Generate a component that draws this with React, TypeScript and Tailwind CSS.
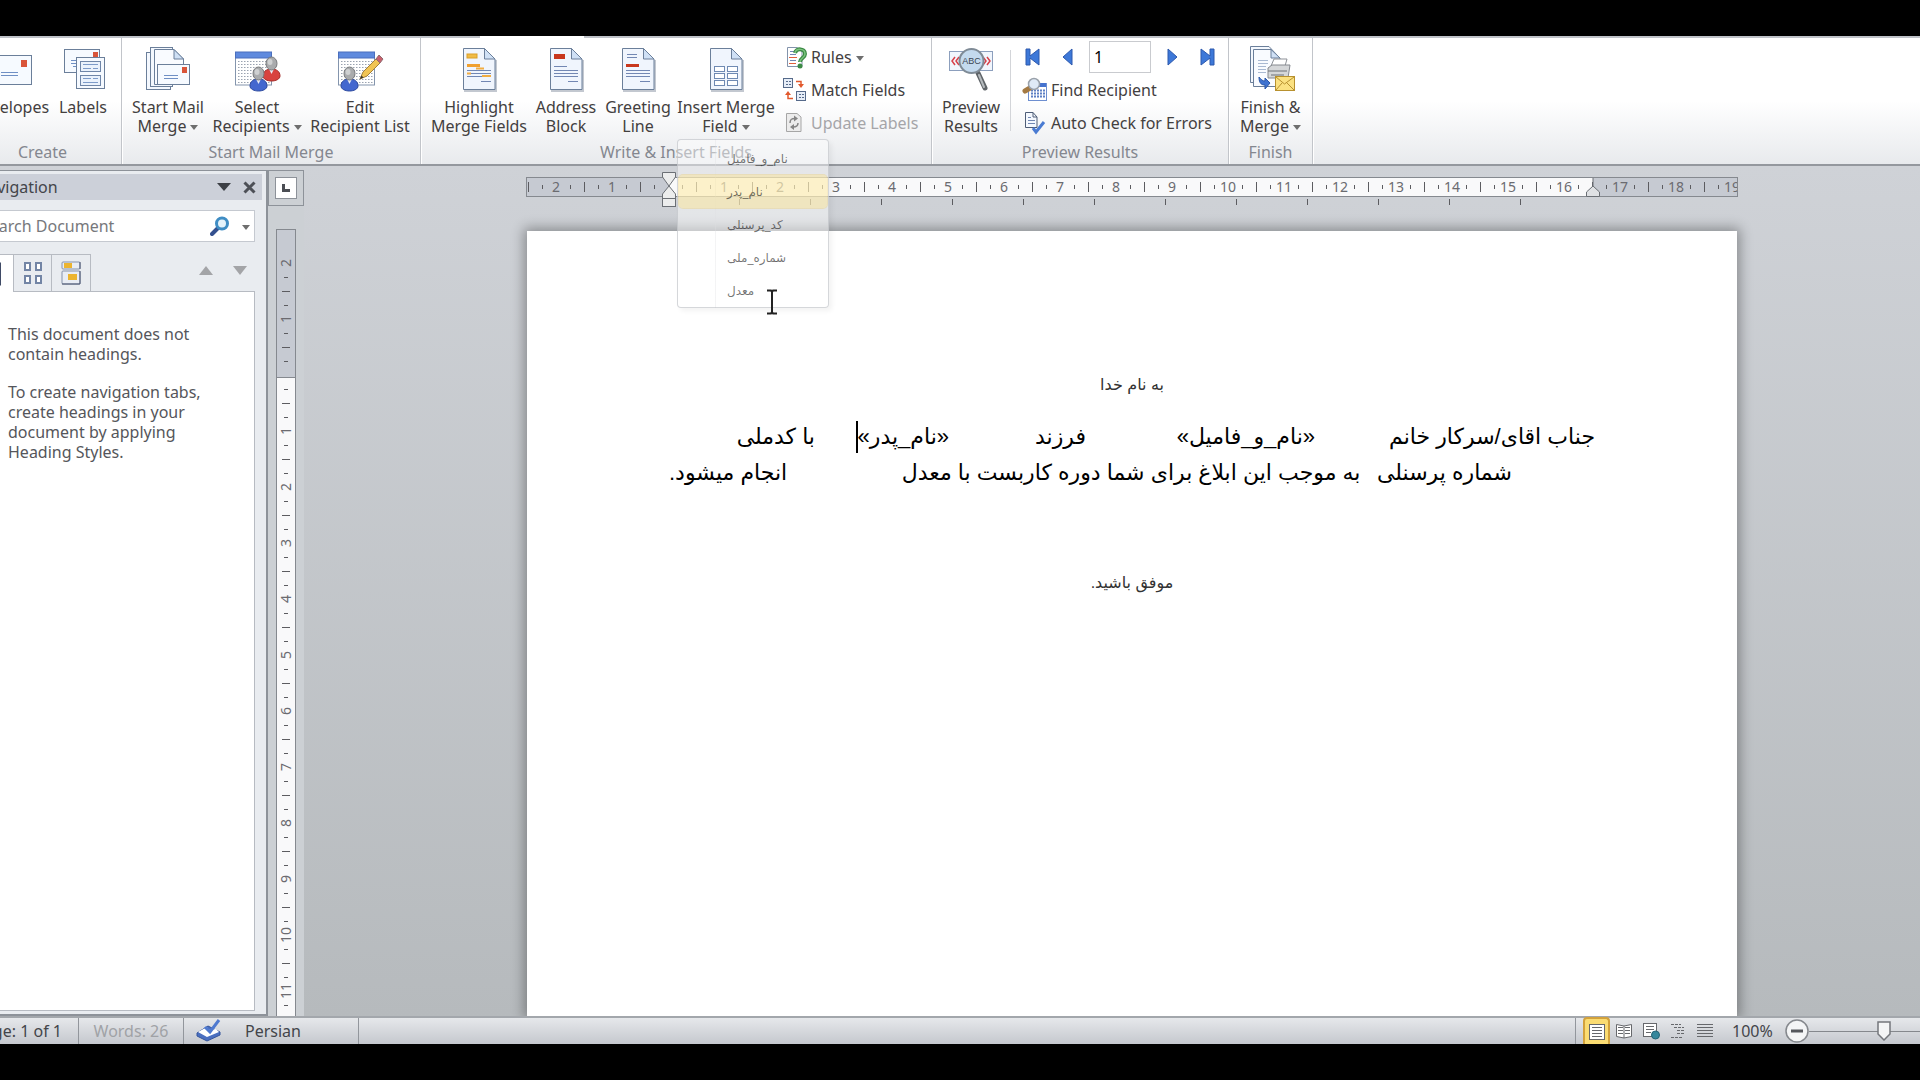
import React from 'react';

const INK = '#6b7f9a';

const Svg = ({ size = 44, children }: { size?: number; children: React.ReactNode }) => (
  <svg
    width={size}
    height={size}
    viewBox={`0 0 ${size} ${size}`}
    fill="none"
    className="shrink-0 overflow-visible"
    aria-hidden="true"
  >
    {children}
  </svg>
);

const Person = ({ x, y, color, edge }: { x: number; y: number; color: string; edge: string }) => (
  <g transform={`translate(${x} ${y})`}>
    <path d="M0 19 C0 14 4 12 8.500 12 C13 12 17 14 17 19 C17 22 13 24 8.500 24 C4 24 0 22 0 19Z" fill={color} stroke={edge} />
    <path d="M6 12 L8.500 17 L11 12Z" fill="#e8ecf5" />
    <ellipse cx="8.500" cy="6.500" rx="5.500" ry="6.500" fill="#a9abad" stroke="#77797c" />
    <ellipse cx="7" cy="5" rx="2.500" ry="3" fill="#cfd1d2" />
  </g>
);

const SheetGrid = () => (
  <>
    <rect x="0.500" y="7" width="36" height="32" fill="#fff" stroke="#8495ad" />
    <rect x="0.500" y="6" width="36" height="6" fill="#5f8ade" stroke="#4a6fbd" />
    {[15, 18, 21, 24, 27, 30, 33, 36].map((y) => (
      <path key={y} d={`M3 ${y}.500 H35`} stroke="#9aa3b0" strokeDasharray="1.500 1.500" />
    ))}
  </>
);

const Page = ({ children }: { children?: React.ReactNode }) => (
  <Svg>
    <path d="M7 45 H39 V14" stroke="#c3c8d0" strokeWidth="2" />
    <path d="M6.500 2.500 H27.500 L38 13 V43.500 H6.500Z" fill="#f0f5fd" stroke={INK} />
    <path d="M27.500 2.500 V13 H38Z" fill="#cfe0f5" stroke={INK} />
    {children}
  </Svg>
);

const EnvelopeIcon = () => (
  <Svg>
    <rect x="2.500" y="9.500" width="40" height="29" fill="#f6faff" stroke={INK} />
    <rect x="32" y="14" width="6" height="7" fill="#d9553a" />
    <path d="M12 26.500 H29 M12 29.500 H29" stroke="#6f8fc4" />
  </Svg>
);

const LabelsIcon = () => (
  <Svg>
    <rect x="3.500" y="3.500" width="35" height="23" fill="#f6faff" stroke={INK} />
    <rect x="32" y="6" width="5" height="5" fill="#d9553a" />
    <path d="M10 14.500 H15 M10 17.500 H15 M12 20.500 H15" stroke="#6f8fc4" />
    <rect x="15.500" y="11.500" width="28" height="31" fill="#f6faff" stroke={INK} />
    <rect x="19.500" y="15.500" width="20" height="10" fill="#eaf2fc" stroke="#6f86a8" />
    <rect x="19.500" y="29.500" width="20" height="10" fill="#eaf2fc" stroke="#6f86a8" />
    <path d="M22 18.500 H37 M22 22.500 H30 M32 22.500 H37 M22 32.500 H30 M32 32.500 H37 M22 36.500 H37" stroke="#7d9bc9" />
  </Svg>
);

const StartMergeIcon = () => (
  <Svg>
    <rect x="0.500" y="6.500" width="24" height="37" fill="#f4f8fe" stroke={INK} />
    <rect x="4.500" y="1.500" width="22" height="39" fill="#f4f8fe" stroke={INK} />
    <path d="M8.500 3.500 H28 L37.500 13 V38.500 H8.500Z" fill="#f9fbff" stroke={INK} />
    <path d="M28 3.500 V13 H37.500Z" fill="#cfe0f5" stroke={INK} />
    <rect x="11.500" y="18.500" width="32" height="20" fill="#f6faff" stroke={INK} />
    <rect x="36" y="21" width="5" height="6" fill="#d9553a" />
    <path d="M18 29.500 H32 M18 32.500 H32" stroke="#6f8fc4" />
  </Svg>
);

const SelectIcon = () => (
  <Svg>
    <SheetGrid />
    <Person x={28} y={11} color="#d8433f" edge="#a52e2b" />
    <Person x={15} y={21} color="#4468cf" edge="#2d4a9e" />
  </Svg>
);

const EditListIcon = () => (
  <Svg>
    <SheetGrid />
    <Person x={3} y={21} color="#4468cf" edge="#2d4a9e" />
    <path d="M22 33 L25 26 L38 13 L42 17 L29 30Z" fill="#f1c453" stroke="#a3803a" />
    <path d="M38 13 L41 9 L45 13 L42 17Z" fill="#c9606c" stroke="#8f6a70" />
    <path d="M22 33 L23.500 29.500 L25.500 31.500Z" fill="#333" />
  </Svg>
);

const HighlightIcon = () => (
  <Page>
    <rect x="10" y="8" width="10" height="4" fill="#f0bb45" stroke="#d99f2a" />
    <rect x="10" y="18" width="13" height="3" fill="#f0a030" />
    <path d="M10 24.500 H34 M10 27.500 H34 M10 30.500 H34 M24 35.500 H34" stroke="#7287b3" />
    <path d="M19 22.500 H27 M10 27.500 H14 M25 30 H34" stroke="#f2ad42" strokeWidth="2" />
  </Page>
);

const AddressIcon = () => (
  <Page>
    <rect x="10" y="8" width="11" height="5" fill="#c8371d" />
    <path d="M10 20.500 H23 M10 24.500 H34 M10 27.500 H34 M10 30.500 H34 M24 35.500 H34" stroke="#7287b3" />
  </Page>
);

const GreetingIcon = () => (
  <Page>
    <path d="M11 8.500 H21 M11 11.500 H21 M10 24.500 H34 M10 27.500 H34 M10 30.500 H34 M24 35.500 H34" stroke="#7287b3" />
    <rect x="10" y="18" width="13" height="3" fill="#c8371d" />
  </Page>
);

const InsertFieldIcon = () => (
  <Page>
    {[20, 27, 34].map((y) => (
      <g key={y} stroke="#6f8ab3" fill="#fff">
        <rect x="10.500" y={y + 0.5} width="10" height="5" />
        <rect x="23.500" y={y + 0.5} width="10" height="5" />
      </g>
    ))}
  </Page>
);

const PreviewIcon = () => (
  <Svg>
    <rect x="0.500" y="5.500" width="43" height="19" fill="#f1f6fd" stroke="#8c9fbd" />
    <path d="M6 11 L3 15 L6 19 M10 11 L7 15 L10 19 M34 11 L37 15 L34 19 M38 11 L41 15 L38 19" stroke="#d8414a" strokeWidth="1.500" />
    <path d="M29 27 L36 42" stroke="#5f6468" strokeWidth="5" strokeLinecap="round" />
    <path d="M30 29 L35 41" stroke="#b5babd" strokeWidth="2" strokeLinecap="round" />
    <circle cx="22.500" cy="15" r="12" fill="#c4daee" stroke="#7f8b96" strokeWidth="2" />
    <text x="22.500" y="18" textAnchor="middle" fontSize="9" fontFamily="Liberation Sans, sans-serif" fill="#3b4652">
      ABC
    </text>
  </Svg>
);

const FinishIcon = () => (
  <Svg>
    <path d="M1.500 0.500 H20 L28 9 V36.500 H1.500Z" fill="#f4f8fe" stroke={INK} />
    <path d="M4.500 3.500 H22 L31 12 V40.500 H4.500Z" fill="#f9fbff" stroke={INK} />
    <path d="M22 3.500 V12 H31Z" fill="#cfe0f5" stroke={INK} />
    <path d="M9 14.500 H19 M9 17.500 H19 M9 20.500 H17 M9 23.500 H17 M9 26.500 H17" stroke="#a9b9d2" />
    <path d="M22 20 L25 13 H38 L36 20Z" fill="#fff" stroke="#8d9197" />
    <path d="M19 22 L23 19 H41 L39 32 H19Z" fill="#d5d7d9" stroke="#85898f" />
    <path d="M19 25 H38 M22 29 H35" stroke="#6d7176" />
    <path d="M10 31 C10 38 13 39 16 39 V43 L21 37 L16 32 V35 C14 35 12 34 10 31Z" fill="#3f73d0" stroke="#2b57a8" />
    <rect x="26.500" y="30.500" width="19" height="14" fill="#fbe181" stroke="#b8912f" />
    <path d="M27 31 L35.500 38 L45 31 M27 44 L33 37 M45 44 L38 37" stroke="#b8912f" />
  </Svg>
);

const RulesIcon = () => (
  <Svg size={24}>
    <path d="M4.500 2.500 H14 L19 7 V21.500 H4.500Z" fill="#fff" stroke="#8393ab" />
    <path d="M7 6.500 H13 M7 9.500 H13 M7 15.500 H13" stroke="#7287b3" />
    <path d="M6 12.500 H14 M6 18.500 H13" stroke="#e0603c" />
    <path d="M12 8 C13 3 22 3 22 9 C22 13 17 13 17 17" stroke="#3c8a45" strokeWidth="4" />
    <path d="M12 8 C13 3 22 3 22 9 C22 13 17 13 17 17" stroke="#7cc47f" strokeWidth="1.500" />
    <circle cx="17" cy="21" r="2.500" fill="#3c8a45" />
  </Svg>
);

const MatchIcon = () => (
  <Svg size={24}>
    <rect x="0.500" y="0.500" width="9" height="9" fill="#e6edf7" stroke="#566a8a" />
    <rect x="13.500" y="13.500" width="9" height="9" fill="#e6edf7" stroke="#566a8a" />
    <path d="M3 3.500 H8 M3 6.500 H8 M16 16.500 H21 M16 19.500 H21" stroke="#566a8a" strokeDasharray="2 1" />
    <path d="M13 3.500 H18 V6" stroke="#e2592d" strokeWidth="1.500" />
    <path d="M15 6 H21 L18 10Z" fill="#e2592d" />
    <path d="M5 17 V20.500 H10" stroke="#e2592d" strokeWidth="1.500" />
    <path d="M2 17 H8 L5 13Z" fill="#e2592d" />
  </Svg>
);

const UpdateIcon = () => (
  <Svg size={24}>
    <path d="M3.500 2.500 H14 L18 6 V20.500 H3.500Z" fill="#ececec" stroke="#a6a6a6" />
    <path d="M7 12 C7 8 9 7.500 12 7.500 M15 12 C15 15 13 16 10 16" stroke="#858585" strokeWidth="1.500" />
    <path d="M11 4.500 L15 7.500 L11 10.500Z M11 13 L7 16 L11 19Z" fill="#858585" />
  </Svg>
);

const FindIcon = () => (
  <Svg size={24}>
    <rect x="5.500" y="5.500" width="18" height="17" fill="#fff" stroke="#6e8fd0" />
    <path d="M6 7 H23" stroke="#4573cf" strokeWidth="4" />
    {[12, 15, 18].map((y) => (
      <path key={y} d={`M8 ${y + 0.5} H22`} stroke="#5c7fc4" strokeWidth="2" strokeDasharray="2 1" />
    ))}
    <path d="M7 10 L2 13" stroke="#a47a43" strokeWidth="5" strokeLinecap="round" />
    <circle cx="11" cy="6" r="5.500" fill="#dfeaf6" stroke="#99a1aa" strokeWidth="1.500" />
  </Svg>
);

const CheckIcon = () => (
  <Svg size={24}>
    <path d="M2.500 1.500 H10 L14 6 V16.500 H2.500Z" fill="#f4f8fe" stroke="#4e5d77" />
    <path d="M10 1.500 V6 H14" stroke="#4e5d77" />
    <path d="M5 6.500 H8 M5 9.500 H12 M5 12.500 H12" stroke="#7287b3" />
    <path d="M10 17 L13 21 L21 11" stroke="#4a7bd2" strokeWidth="3" />
  </Svg>
);

const Caret = () => (
  <svg width="8" height="5" viewBox="0 0 8 5" className="ml-1 inline-block align-middle" aria-hidden="true">
    <path d="M0 0 H8 L4 5Z" fill="#6e6e6e" />
  </svg>
);

type BigButtonProps = { icon: React.ReactNode; lines: string[]; width: string; caret?: boolean };

const BigButton = ({ icon, lines, width, caret }: BigButtonProps) => (
  <button className={`flex shrink-0 flex-col items-center gap-2 pt-2 text-base leading-[19px] text-[#43403f] ${width}`}>
    {icon}
    <span className="flex flex-col items-center whitespace-nowrap">
      {lines.map((line, i) => (
        <span key={line}>
          {line}
          {caret && i === lines.length - 1 && <Caret />}
        </span>
      ))}
    </span>
  </button>
);

type SmallButtonProps = { icon: React.ReactNode; label: string; caret?: boolean; disabled?: boolean };

const SmallButton = ({ icon, label, caret, disabled }: SmallButtonProps) => (
  <button
    disabled={disabled}
    className="flex h-[33px] items-center gap-1 whitespace-nowrap text-base text-[#43403f] disabled:text-[#a5a5a8]"
  >
    {icon}
    <span>
      {label}
      {caret && <Caret />}
    </span>
  </button>
);

const Group = ({ title, width, children }: { title: string; width: string; children: React.ReactNode }) => (
  <section className={`flex shrink-0 flex-col justify-between border-r border-[#c2c5ca] shadow-[1px_0_0_#fff] ${width}`}>
    <div className="flex">{children}</div>
    <h2 className="text-center text-base leading-6 text-[#84878f]">{title}</h2>
  </section>
);

const mergeFields = ['نام_و_فامیل', 'نام_پدر', 'کد_پرسنلی', 'شماره_ملی', 'معدل'];

const FieldMenu = () => (
  <ul className="absolute top-[101px] left-0 z-20 w-[152px] rounded-sm border border-[#b9bcc1]/60 bg-white/45 bg-[linear-gradient(to_right,transparent_37px,#dcdde055_37px,#dcdde055_38px,transparent_38px)] px-px pt-0.5 shadow-[3px_3px_5px_#0000000d]">
    {mergeFields.map((field, i) => (
      <li key={field}>
        <button
          className={`flex h-[33px] w-full items-center rounded-sm pl-12 font-[DejaVu_Sans,sans-serif] text-xs text-black/55 ${
            i === 1 ? 'bg-[#fce48f]/45 ring-1 ring-[#eecf74]/40' : ''
          }`}
        >
          <span dir="rtl">{field}</span>
        </button>
      </li>
    ))}
  </ul>
);

const RecordButton = ({ label, d }: { label: string; d: string }) => (
  <button aria-label={label}>
    <svg width="16" height="18" viewBox="0 0 16 18">
      <path d={d} fill="#3d78d8" stroke="#2c58ad" />
    </svg>
  </button>
);

const Ribbon = () => (
  <header>
    <div className="flex h-0.5">
      <div className="w-[516px] bg-[#bfc2c8]" />
      <div className="w-[104px] bg-white" />
      <div className="flex-1 bg-[#bfc2c8]" />
    </div>
    <div className="flex h-[128px] border-b-2 border-[#94989e] bg-linear-to-b from-white from-50% to-[#e8eaed]">
      <Group title="Create" width="w-[158px]">
        <div className="flex pl-2">
          <BigButton icon={<EnvelopeIcon />} lines={['Envelopes']} width="w-[78px]" />
          <BigButton icon={<LabelsIcon />} lines={['Labels']} width="w-[66px]" />
        </div>
      </Group>
      <Group title="Start Mail Merge" width="w-[299px]">
        <div className="flex pl-1.5">
          <BigButton icon={<StartMergeIcon />} lines={['Start Mail', 'Merge']} width="w-[80px]" caret />
          <BigButton icon={<SelectIcon />} lines={['Select', 'Recipients']} width="w-[98px]" caret />
          <BigButton icon={<EditListIcon />} lines={['Edit', 'Recipient List']} width="w-[108px]" />
        </div>
      </Group>
      <Group title="Write & Insert Fields" width="w-[511px]">
        <div className="flex pl-1">
          <BigButton icon={<HighlightIcon />} lines={['Highlight', 'Merge Fields']} width="w-[108px]" />
          <BigButton icon={<AddressIcon />} lines={['Address', 'Block']} width="w-[66px]" />
          <BigButton icon={<GreetingIcon />} lines={['Greeting', 'Line']} width="w-[78px]" />
          <div className="relative">
            <BigButton icon={<InsertFieldIcon />} lines={['Insert Merge', 'Field']} width="w-[98px]" caret />
            <FieldMenu />
          </div>
          <div className="flex flex-col pt-0.5 pl-2">
            <SmallButton icon={<RulesIcon />} label="Rules" caret />
            <SmallButton icon={<MatchIcon />} label="Match Fields" />
            <SmallButton icon={<UpdateIcon />} label="Update Labels" disabled />
          </div>
        </div>
      </Group>
      <Group title="Preview Results" width="w-[297px]">
        <BigButton icon={<PreviewIcon />} lines={['Preview', 'Results']} width="w-[78px]" />
        <div className="mt-3 mb-2 w-px bg-[#d3d5d9]" />
        <div className="flex flex-col pt-0.5 pl-3">
          <div className="flex h-[33px] items-center pl-0.5">
            <RecordButton label="First record" d="M1 1 H5 V8 L14 1 V17 L5 10 V17 H1Z" />
            <div className="w-[18px]" />
            <RecordButton label="Previous record" d="M13 1 V17 L4 9Z" />
            <input
              aria-label="Record"
              defaultValue="1"
              className="mr-3.5 ml-3.5 h-8 w-[62px] border border-[#c9cbcf] bg-white px-1 text-base text-black"
            />
            <RecordButton label="Next record" d="M3 1 V17 L12 9Z" />
            <div className="w-[18px]" />
            <RecordButton label="Last record" d="M15 1 H11 V8 L2 1 V17 L11 10 V17 H15Z" />
          </div>
          <SmallButton icon={<FindIcon />} label="Find Recipient" />
          <SmallButton icon={<CheckIcon />} label="Auto Check for Errors" />
        </div>
      </Group>
      <Group title="Finish" width="w-[84px]">
        <BigButton icon={<FinishIcon />} lines={['Finish &', 'Merge']} width="w-[83px]" caret />
      </Group>
    </div>
  </header>
);

const NavigationPane = () => (
  <aside className="flex w-[304px] shrink-0 flex-col border-t border-r-2 border-b-2 border-[#8d9299] bg-[#e9ecf0] pt-[3px] text-base text-[#55565b]">
    <div className="mr-1 flex h-[26px] items-center bg-[#ccd0d9] pl-3 text-[#43454a]">
      <h2>Navigation</h2>
      <button aria-label="Pane options" className="ml-auto">
        <svg width="14" height="8" viewBox="0 0 14 8">
          <path d="M0 0 H14 L7 8Z" fill="#3c3f45" />
        </svg>
      </button>
      <button aria-label="Close" className="mr-1.5 ml-3">
        <svg width="13" height="13" viewBox="0 0 13 13">
          <path d="M1.500 1.500 L11.500 11.500 M11.500 1.500 L1.500 11.500" stroke="#4d5057" strokeWidth="3" />
        </svg>
      </button>
    </div>
    <div className="mt-2.5 mr-[11px] ml-3 flex h-8 items-center border border-[#c5c9d0] bg-white pr-1">
      <input
        aria-label="Search Document"
        placeholder="Search Document"
        className="w-0 flex-1 bg-transparent pl-1 outline-none placeholder:text-[#77787c]"
      />
      <button aria-label="Search">
        <svg width="20" height="20" viewBox="0 0 20 20" fill="none">
          <path d="M8 12 L2 18" stroke="#34508f" strokeWidth="4" strokeLinecap="round" />
          <circle cx="12" cy="7.500" r="5.500" fill="#e4f3fb" stroke="#3f8dc4" strokeWidth="3" />
        </svg>
      </button>
      <button aria-label="Search options" className="ml-2">
        <Caret />
      </button>
    </div>
    <div className="mt-3 mr-[11px] ml-3 flex h-[38px] items-stretch">
      <button aria-label="Headings" className="flex w-[37px] items-center justify-end border-t border-l border-[#b7bbc2] bg-white pr-3">
        <svg width="24" height="24" viewBox="0 0 24 24">
          <path d="M1 2 H23 V22 H1Z" fill="#fff" stroke="#3f4a66" strokeWidth="3" />
        </svg>
      </button>
      <button aria-label="Pages" className="flex w-[39px] items-center justify-center border border-[#b7bbc2]">
        <svg width="20" height="22" viewBox="0 0 20 22" fill="#fff" stroke="#7385a5" strokeWidth="2">
          <rect x="2" y="1" width="5" height="7" />
          <rect x="13" y="1" width="5" height="7" />
          <rect x="2" y="14" width="5" height="7" />
          <rect x="13" y="14" width="5" height="7" />
        </svg>
      </button>
      <button aria-label="Results" className="flex w-[39px] items-center justify-center border border-l-0 border-[#b7bbc2]">
        <svg width="20" height="24" viewBox="0 0 20 24">
          <rect x="1" y="1" width="18" height="7" rx="1" fill="#e9edf4" stroke="#8592aa" />
          <rect x="3" y="2" width="8" height="5" fill="#ecb42f" />
          <rect x="1" y="10" width="18" height="13" rx="1" fill="#e9edf4" stroke="#8592aa" />
          <path d="M19 1 V8 M19 10 V23 H1" stroke="#4a556e" fill="none" />
          <rect x="7" y="13" width="9" height="6" fill="#ecb42f" />
        </svg>
      </button>
      <div className="flex flex-1 items-center justify-end gap-5 border-b border-[#b7bbc2] pr-2 pb-1">
        <button aria-label="Previous heading">
          <svg width="14" height="9" viewBox="0 0 14 9">
            <path d="M0 9 H14 L7 0Z" fill="#a3a4a7" />
          </svg>
        </button>
        <button aria-label="Next heading">
          <svg width="14" height="9" viewBox="0 0 14 9">
            <path d="M0 0 H14 L7 9Z" fill="#a3a4a7" />
          </svg>
        </button>
      </div>
    </div>
    <div className="mr-[11px] mb-[3px] ml-3 flex-1 border-r border-b border-[#b7bbc2] bg-white pt-8 pr-8 pl-8 leading-5">
      <p>
        This document does not
        <br />
        contain headings.
      </p>
      <p className="mt-[18px]">
        To create navigation tabs,
        <br />
        create headings in your
        <br />
        document by applying
        <br />
        Heading Styles.
      </p>
    </div>
  </aside>
);

// marks between two centimetre numbers: quarter, half, quarter
const HorizontalMarks = () => (
  <>
    <i className="flex w-3.5 shrink-0 justify-center"><b className="h-1 w-px bg-[#5c5c60]" /></i>
    <i className="flex w-3.5 shrink-0 justify-center"><b className="h-2.5 w-px bg-[#5c5c60]" /></i>
    <i className="flex w-3.5 shrink-0 justify-center"><b className="h-1 w-px bg-[#5c5c60]" /></i>
  </>
);

const VerticalMarks = () => (
  <>
    <i className="flex h-3.5 shrink-0 items-center"><b className="h-px w-1 bg-[#5c5c60]" /></i>
    <i className="flex h-3.5 shrink-0 items-center"><b className="h-px w-2 bg-[#5c5c60]" /></i>
    <i className="flex h-3.5 shrink-0 items-center"><b className="h-px w-1 bg-[#5c5c60]" /></i>
  </>
);

const horizontalNumbers = Array.from({ length: 23 }, (_, i) => Math.abs(i - 3));
const verticalNumbers = Array.from({ length: 14 }, (_, i) => Math.abs(i - 2));
const tabStops = Array.from({ length: 12 }, (_, i) => i);

const HorizontalRuler = () => (
  <div className="relative mx-auto w-[1212px] pt-[7px] text-sm text-[#6b6b70]">
    <div className="h-5 overflow-hidden border border-[#85898f] bg-[linear-gradient(to_right,#c6cad2_142px,#f9f9fa_142px,#f9f9fa_1066px,#c6cad2_1066px)]">
      <div className="-ml-[34px] flex h-full items-center">
        {horizontalNumbers.map((n, i) => (
          <React.Fragment key={i}>
            <span className="flex w-3.5 shrink-0 justify-center">{n || ''}</span>
            <HorizontalMarks />
          </React.Fragment>
        ))}
      </div>
    </div>
    <div className="flex pt-0.5 pl-[143px]">
      {tabStops.map((stop) => (
        <span key={stop} className="h-1.5 w-[71px] border-r border-[#5c5c60]" />
      ))}
    </div>
    <svg width="14" height="40" viewBox="0 0 14 40" className="absolute top-0.5 left-[136px]" fill="#eceded" stroke="#6b6f75">
      <path d="M0.500 0.500 H13.500 V5 L7 14 L0.500 5Z" />
      <path d="M7 14 L13.500 22 V26.500 H0.500 V22Z" />
      <rect x="0.500" y="26.500" width="13" height="8" />
    </svg>
    <svg width="14" height="20" viewBox="0 0 14 20" className="absolute top-2 left-[1060px]" fill="#dfe1e4" stroke="#6b6f75">
      <path d="M7 0 V8 L13.500 14 V18.500 H0.500 V14 L7 8" />
    </svg>
  </div>
);

const VerticalRuler = () => (
  <div className="flex w-9 shrink-0 flex-col overflow-hidden bg-[#ccd0d4]">
    <button aria-label="Tab selector" className="flex h-9 w-9 shrink-0 items-center justify-center border border-[#8d9299]">
      <span className="flex h-[22px] w-[22px] items-center justify-center border border-[#8d9299] bg-white">
        <span className="h-2 w-2 border-b-[3px] border-l-[3px] border-[#4b4e54]" />
      </span>
    </button>
    <div className="mt-[23px] ml-2 flex min-h-0 w-5 flex-1 flex-col items-center overflow-hidden border border-b-0 border-[#85898f] bg-[linear-gradient(to_bottom,#c6cad2_147px,#85898f_147px,#85898f_148px,#f9f9fa_148px)] pt-[26px] text-sm text-[#6b6b70]">
      {verticalNumbers.map((n, i) => (
        <React.Fragment key={i}>
          <span className="flex h-3.5 w-5 shrink-0 -rotate-90 items-center justify-center">{n || ''}</span>
          <VerticalMarks />
        </React.Fragment>
      ))}
    </div>
  </div>
);

const Letter = () => (
  <article
    dir="rtl"
    lang="fa"
    className="mx-auto w-[1210px] flex-1 bg-white px-[142px] pt-[140px] font-[Liberation_Sans,DejaVu_Sans,sans-serif] text-black shadow-[0_0_12px_3px_#00000055]"
  >
    <p className="text-center text-base leading-7 text-[#333]">به نام خدا</p>
    <div className="mt-5 text-[22px] leading-9 whitespace-nowrap">
      <p className="flex">
        <span className="w-[280px]">جناب اقای/سرکار خانم</span>
        <span className="w-[229px]">«نام_و_فامیل»</span>
        <span className="w-[137px]">فرزند</span>
        <span className="flex w-[134px] items-center">
          «نام_پدر»
          <span className="h-8 w-0.5 bg-black" />
        </span>
        <span>با کدملی</span>
      </p>
      <p className="flex pr-[83px]">
        <span className="w-[152px]">شماره پرسنلی</span>
        <span className="w-[575px]">به موجب این ابلاغ برای شما دوره کاربست با معدل</span>
        <span>انجام میشود.</span>
      </p>
    </div>
    <p className="mt-[78px] text-center text-base leading-7 text-[#333]">موفق باشید.</p>
  </article>
);

const ViewButton = ({ label, active, children }: { label: string; active?: boolean; children: React.ReactNode }) => (
  <button
    aria-label={label}
    className={`flex h-7 w-[27px] items-center justify-center ${
      active ? 'rounded-t border-2 border-b-0 border-[#d3a23c] bg-[#fbdc72]' : ''
    }`}
  >
    <svg width="18" height="18" viewBox="0 0 18 18" fill="none" stroke="#66686c">
      {children}
    </svg>
  </button>
);

const StatusBar = () => (
  <footer className="flex h-7 shrink-0 items-center border-t-2 border-[#a3a7ac] bg-linear-to-b from-[#e6e8eb] to-[#c5c8ce] text-base whitespace-nowrap text-[#43454a]">
    <div className="flex h-full w-[115px] items-center justify-end border-r border-[#92969c] pr-4">Page: 1 of 1</div>
    <div className="flex h-full w-[105px] items-center justify-center border-r border-[#92969c] text-[#a0a2a6]">Words: 26</div>
    <div className="flex h-full w-[175px] items-center gap-6 border-r border-[#92969c] pl-3">
      <svg width="25" height="24" viewBox="0 0 25 24">
        <path d="M1 14 L12 7 L24 13 V16 L11 22 L1 17Z" fill="#4a6fc0" stroke="#34549c" />
        <path d="M2 13 L11 8 L12 11 L20 10 L23 13 L11 18Z" fill="#fff" />
        <path d="M9 8 L14 13 L23 1" fill="none" stroke="#4f7ad0" strokeWidth="3" />
      </svg>
      Persian
    </div>
    <div className="ml-auto flex h-full w-[385px] items-center border-l border-[#92969c] pl-[7px]">
      <ViewButton label="Print Layout" active>
        <rect x="1.500" y="1.500" width="15" height="15" fill="#fff" />
        <path d="M4 4.500 H14 M4 7.500 H14 M4 10.500 H14 M4 13.500 H14" />
      </ViewButton>
      <ViewButton label="Full Screen Reading">
        <path d="M1.500 2.500 L9 4 L16.500 2.500 V14.500 L9 16 L1.500 14.500Z M9 4 V16" fill="#fff" />
        <path d="M3 5.500 H8 M3 8.500 H8 M3 11.500 H8 M10 5.500 H15 M10 8.500 H15 M10 11.500 H15" />
      </ViewButton>
      <ViewButton label="Web Layout">
        <rect x="1.500" y="1.500" width="13" height="13" fill="#fff" />
        <path d="M4 4.500 H12 M4 7.500 H12 M4 10.500 H9" />
        <circle cx="13.500" cy="13" r="4" fill="#35879c" stroke="#246577" />
      </ViewButton>
      <ViewButton label="Outline">
        <path d="M2 2.500 H12 M5 5.500 H15 M8 8.500 H16 M8 11.500 H16 M2 15.500 H14" strokeDasharray="3 1" />
      </ViewButton>
      <ViewButton label="Draft">
        <path d="M1 2.500 H17 M1 5.500 H17 M1 8.500 H17 M1 11.500 H17 M1 14.500 H17" />
      </ViewButton>
      <span className="ml-3.5">100%</span>
      <button aria-label="Zoom out" className="ml-3">
        <svg width="24" height="24" viewBox="0 0 24 24">
          <circle cx="12" cy="12" r="11" fill="#f4f5f6" stroke="#85888d" strokeWidth="1.500" />
          <path d="M6 12 H18" stroke="#55575c" strokeWidth="3" />
        </svg>
      </button>
      <div className="relative flex flex-1 items-center">
        <input
          type="range"
          aria-label="Zoom"
          defaultValue="50"
          className="h-px w-full appearance-none bg-[#85888d] [&::-webkit-slider-thumb]:h-5 [&::-webkit-slider-thumb]:w-3.5 [&::-webkit-slider-thumb]:appearance-none"
        />
        <svg width="14" height="20" viewBox="0 0 14 20" className="pointer-events-none absolute left-1/2 -translate-x-1/2">
          <path d="M1 1 H13 V13 L7 19 L1 13Z" fill="#f4f5f6" stroke="#74777c" strokeWidth="1.500" />
        </svg>
      </div>
    </div>
  </footer>
);

const App = () => (
  <div className="h-screen overflow-hidden bg-black py-9 font-[Noto_Sans,sans-serif]">
    {/* the window runs past both edges of the screen */}
    <div className="relative -mr-10 -ml-9 flex h-full flex-col overflow-hidden">
      <Ribbon />
      <div className="flex min-h-0 flex-1 bg-linear-to-b from-[#cfd2d7] to-[#b6babd] pt-1">
        <NavigationPane />
        <VerticalRuler />
        <main className="flex flex-1 flex-col overflow-hidden">
          <div className="h-[61px] shrink-0">
            <HorizontalRuler />
          </div>
          <Letter />
        </main>
      </div>
      <StatusBar />
      <svg width="12" height="26" viewBox="0 0 12 26" fill="none" className="absolute top-[253px] left-[802px] z-30" aria-hidden="true">
        <path d="M1 1.500 H5 L6 3 L7 1.500 H11 M1 24.500 H5 L6 23 L7 24.500 H11 M6 3 V23" stroke="#222" strokeWidth="2" />
      </svg>
    </div>
  </div>
);

export default App;
